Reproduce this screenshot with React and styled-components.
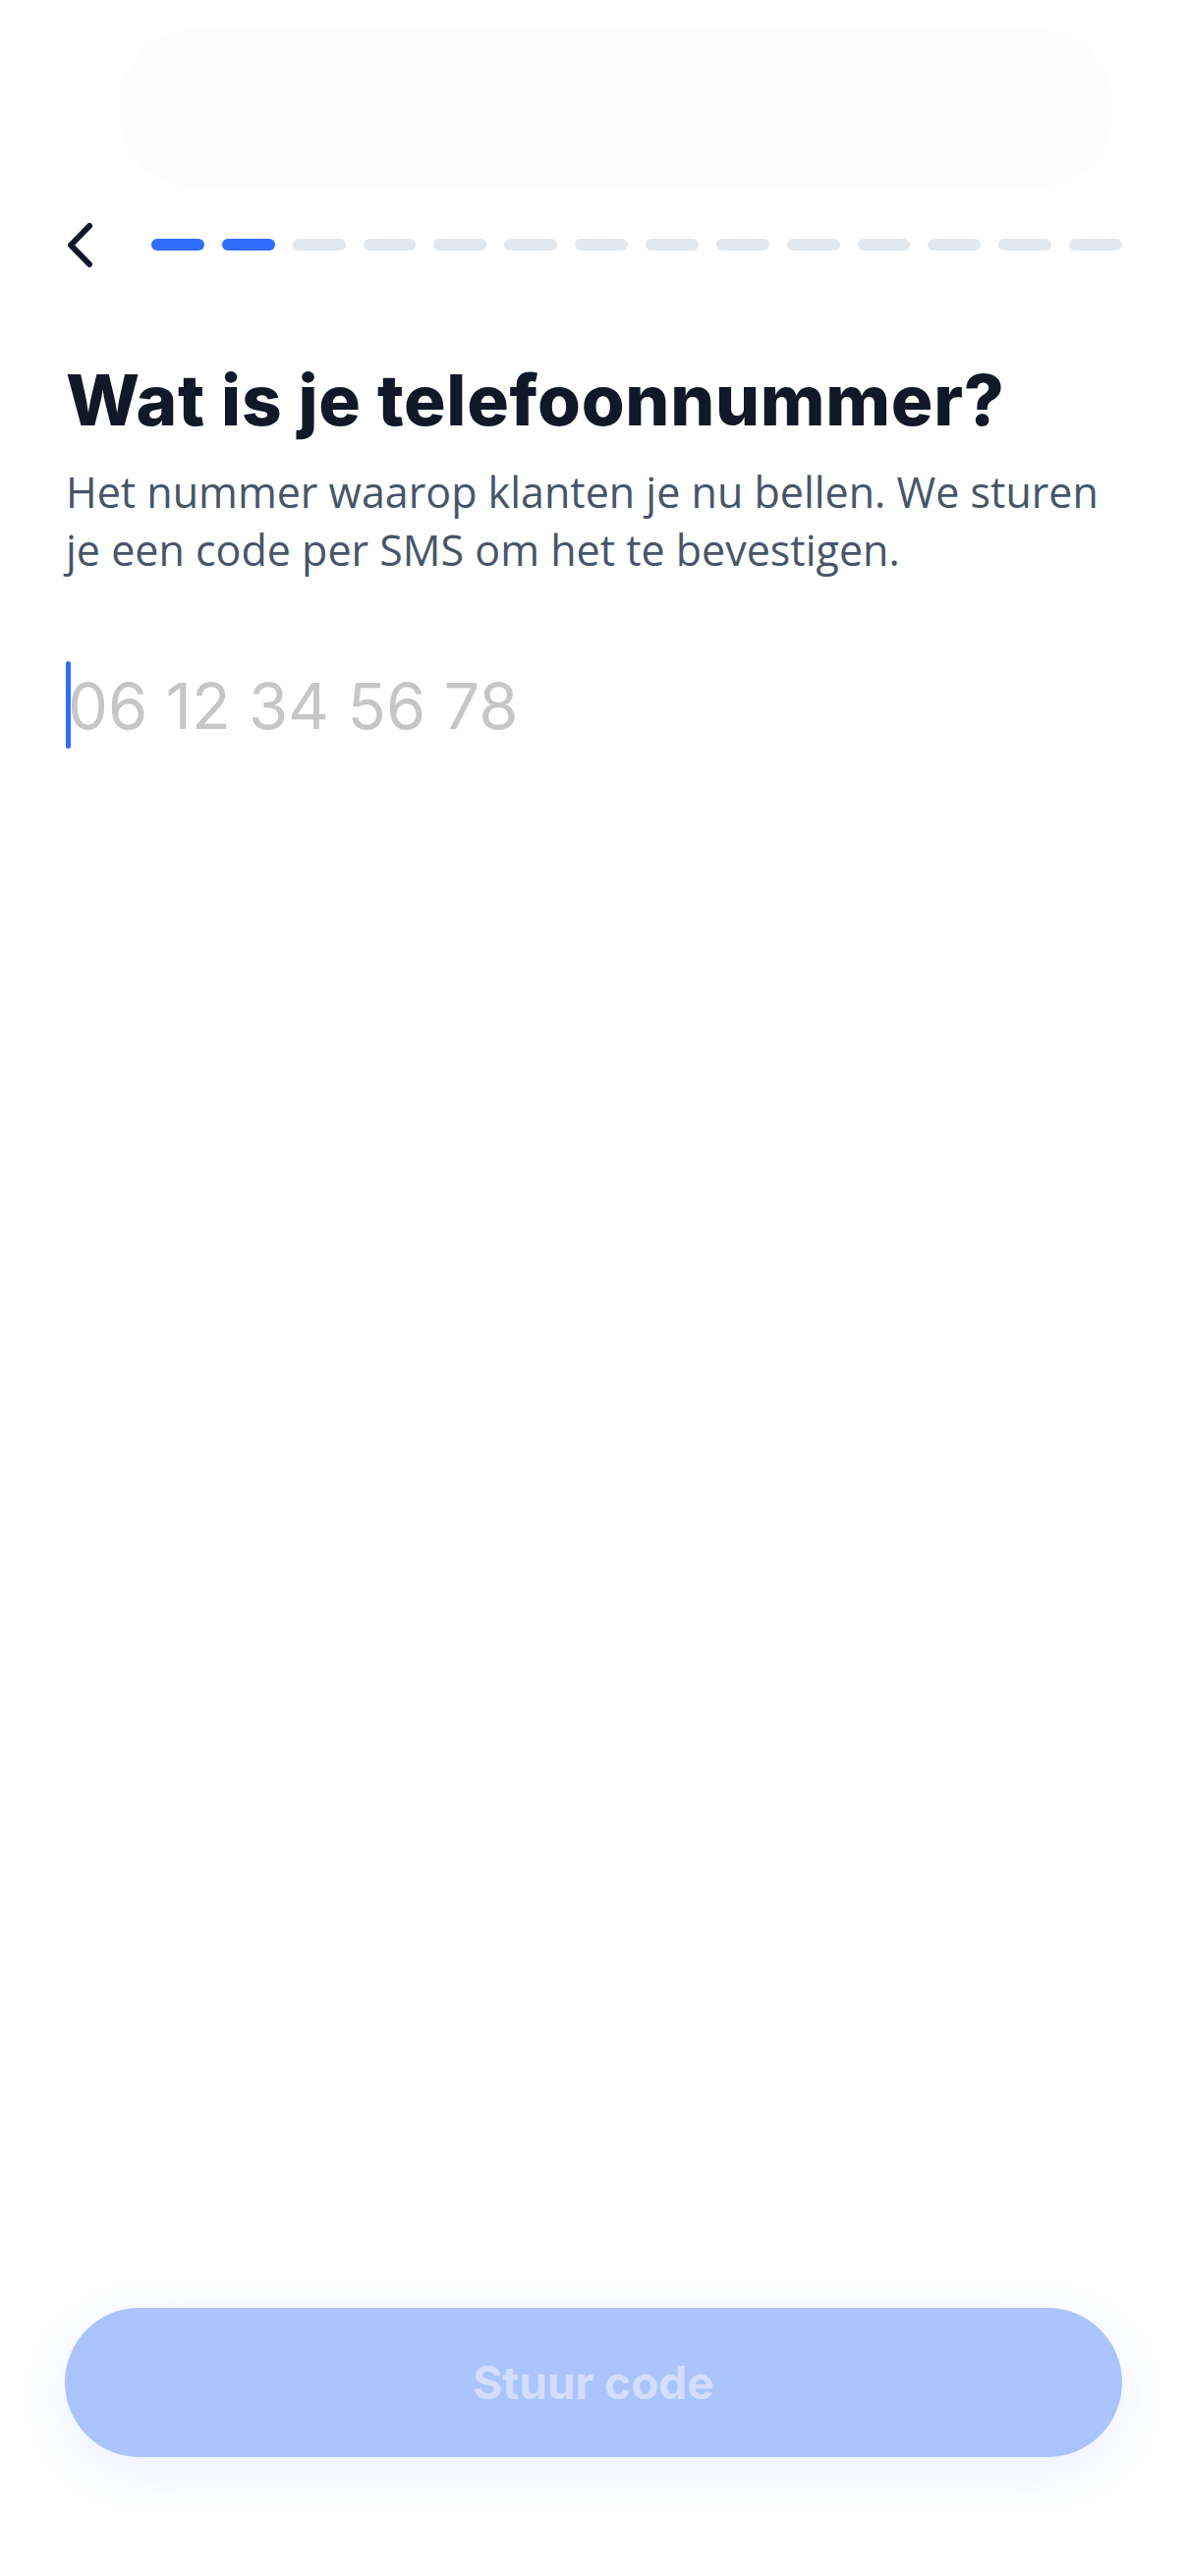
import React from "react";
import styled, { createGlobalStyle } from "styled-components";

const Global = createGlobalStyle`
  html, body { margin: 0; padding: 0; background: #ffffff; overflow: hidden; }
  * { box-sizing: border-box; }
`;

const Screen = styled.div`
  min-height: 100vh;
  display: flex;
  flex-direction: column;
  background: #ffffff;
  font-family: Inter, "Noto Sans", sans-serif;
`;

const TopGlow = styled.div`
  margin: 28px 72px 0 120px;
  height: 164px;
  border-radius: 82px;
  background: #fcfcfd;
  filter: blur(3px);
`;

const Header = styled.div`
  display: flex;
  align-items: center;
  height: 50px;
  margin-top: 32px;
  padding: 0 64px 0 66px;
  gap: 56px;
`;

const BackButton = styled.button`
  width: 32px;
  height: 50px;
  padding: 0;
  border: 0;
  background: none;
  display: flex;
  align-items: center;
  justify-content: center;
  color: #0f172a;
  cursor: pointer;
`;

const Progress = styled.div`
  flex: 1;
  display: flex;
  gap: 18px;
`;

const Dash = styled.div`
  flex: 1;
  height: 12px;
  border-radius: 6px;
  background: ${(p) => (p.$active ? "#306cfe" : "#e2e8f0")};
`;

const Content = styled.div`
  padding: 0 60px 0 67px;
`;

const Title = styled.h1`
  margin: 92px 0 0;
  font-family: Inter, sans-serif;
  font-weight: 800;
  font-size: 71px;
  line-height: 83px;
  letter-spacing: 0.7px;
  color: #111827;
  white-space: nowrap;
`;

const Subtitle = styled.p`
  margin: 22px 0 0;
  font-family: "Open Sans", "Noto Sans", sans-serif;
  font-size: 43px;
  line-height: 59px;
  color: #475569;
  white-space: nowrap;
`;

const InputWrap = styled.div`
  position: relative;
  margin-top: 85px;
  height: 89px;
`;

const Caret = styled.span`
  position: absolute;
  left: 0;
  top: -1px;
  width: 5px;
  height: 89px;
  border-radius: 3px;
  background: #306cfe;
`;

const PhoneInput = styled.input`
  width: 100%;
  height: 89px;
  padding: 0 0 0 2px;
  border: 0;
  outline: none;
  background: transparent;
  font-family: Inter, sans-serif;
  font-size: 65px;
  line-height: 89px;
  color: #111827;
  caret-color: transparent;
  &::placeholder {
    color: #c6c6c8;
  }
`;

const Spacer = styled.div`
  flex: 1;
`;

const SubmitButton = styled.button`
  margin: 0 64px 121px 66px;
  height: 152px;
  border: 0;
  border-radius: 76px;
  background: #abc4fe;
  box-shadow: 0 14px 60px rgba(48, 108, 254, 0.1);
  font-family: Inter, sans-serif;
  font-weight: 700;
  font-size: 46px;
  color: #d3defd;
  cursor: default;
`;

export default function App() {
  const steps = Array.from({ length: 14 }, (_, i) => i < 2);
  return (
    <Screen>
      <Global />
      <TopGlow />
      <Header>
        <BackButton aria-label="Terug">
          <svg width="32" height="50" viewBox="0 0 32 50" fill="none">
            <polyline
              points="25,6 6,25.5 25,45"
              stroke="currentColor"
              strokeWidth="6"
              strokeLinecap="round"
              strokeLinejoin="round"
            />
          </svg>
        </BackButton>
        <Progress>
          {steps.map((a, i) => (
            <Dash key={i} $active={a} />
          ))}
        </Progress>
      </Header>
      <Content>
        <Title>Wat is je telefoonnummer?</Title>
        <Subtitle>
          Het nummer waarop klanten je nu bellen. We sturen
          <br />
          je een code per SMS om het te bevestigen.
        </Subtitle>
        <InputWrap>
          <PhoneInput type="tel" placeholder="06 12 34 56 78" />
          <Caret />
        </InputWrap>
      </Content>
      <Spacer />
      <SubmitButton disabled>Stuur code</SubmitButton>
    </Screen>
  );
}
